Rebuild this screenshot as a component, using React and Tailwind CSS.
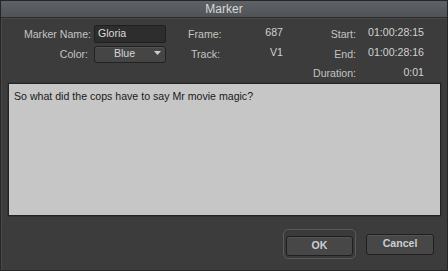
import React from 'react';

const Label = ({ children, className = '' }) => (
  <div className={`text-[10.6px] text-[#c4c4c4] leading-none ${className}`}>{children}</div>
);

const Value = ({ children, className = '' }) => (
  <div className={`text-[10.6px] text-[#d2d2d2] leading-none text-right ${className}`}>{children}</div>
);

export default function App() {
  return (
    <div
      className="w-[448px] h-[271px] flex flex-col bg-[#3c3c3c] border border-[#262626] overflow-hidden"
      style={{ fontFamily: '"Liberation Sans", Arial, sans-serif' }}
    >
      {/* Title bar */}
      <div className="h-[17px] shrink-0 flex items-center justify-center bg-gradient-to-b from-[#5e6165] to-[#505357] border-b border-[#2c2c2c]">
        <span className="text-[12px] text-[#d8d8d8] leading-none">Marker</span>
      </div>

      <div className="flex-1 flex flex-col border-l border-t border-[#484848]">
        {/* Fields */}
        <div className="grid grid-cols-[89px_75px_82px_35px_73px_68px] grid-rows-[18px_16px_16px] gap-y-[3px] mt-[6px] items-center">
          <Label className="text-right">Marker Name:</Label>
          <div className="pl-[3px]">
            <div className="w-[72px] h-[18px] bg-[#2d2d2d] border border-[#1f1f1f] rounded-[2px] flex items-center pl-[3px] text-[10.6px] text-[#dcdcdc]">
              Gloria
            </div>
          </div>
          <Label className="pl-[22px]">Frame:</Label>
          <Value className="-translate-y-[2px]">687</Value>
          <Label className="text-right">Start:</Label>
          <Value className="-translate-y-[2px]">01:00:28:15</Value>

          <Label className="text-right pr-[3px]">Color:</Label>
          <div className="pl-[3px]">
            <div className="relative w-[72px] h-[17px] bg-[#454545] border border-[#222222] rounded-[3px] flex items-center justify-center pr-[11px] text-[10.6px] text-[#d6d6d6] shadow-[inset_0_1px_0_#525252]">
              Blue
              <svg className="absolute right-[4px] top-[4px]" width="7" height="4" viewBox="0 0 7 4">
                <path d="M0 0 H7 L3.5 4 Z" fill="#cfcfcf" />
              </svg>
            </div>
          </div>
          <Label className="pl-[25px]">Track:</Label>
          <Value className="-translate-y-[2px]">V1</Value>
          <Label className="text-right">End:</Label>
          <Value className="-translate-y-[2px]">01:00:28:16</Value>

          <div />
          <div />
          <div />
          <div />
          <Label className="text-right">Duration:</Label>
          <Value className="-translate-y-[1px]">0:01</Value>
        </div>

        {/* Comment area */}
        <div className="mx-[6px] mt-[2px] h-[133px] bg-[#c6c6c6] border border-[#232323] shadow-[0_0_0_1px_#343434] px-[5px] pt-[7px]">
          <p className="text-[10.6px] text-[#1a1a1a] leading-none">So what did the cops have to say Mr movie magic?</p>
        </div>

        {/* Buttons */}
        <div className="flex justify-end items-center mt-[13px] pr-[13px] gap-[10px]">
          <div className="p-[2px] rounded-[5px] border border-[#5a5a5a] bg-[#3a3a3a]">
            <button className="w-[67px] h-[20px] rounded-[3px] bg-[#474747] border border-[#1f1f1f] text-[10.6px] font-bold text-[#c9ced6] shadow-[inset_0_1px_0_#535353]">
              OK
            </button>
          </div>
          <button className="w-[68px] h-[21px] rounded-[3px] bg-[#474747] border border-[#1f1f1f] text-[10.6px] font-bold text-[#c9ced6] shadow-[inset_0_1px_0_#535353]">
            Cancel
          </button>
        </div>
      </div>
    </div>
  );
}
